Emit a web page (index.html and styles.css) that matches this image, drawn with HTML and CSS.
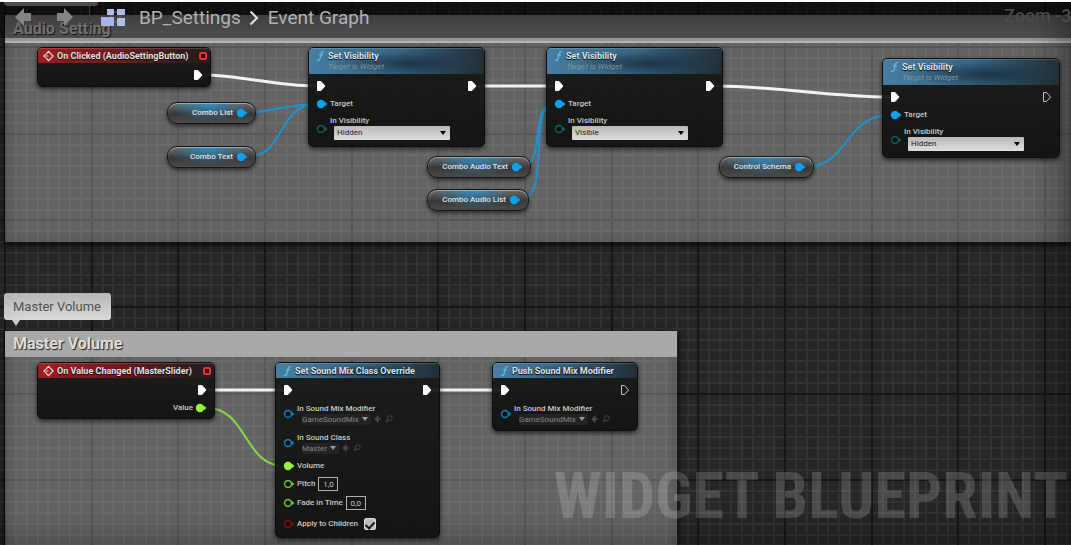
FILE: index.html
```html
<!DOCTYPE html>
<html lang="en">
<head>
<meta charset="utf-8">
<title>BP_Settings - Event Graph</title>
<link rel="stylesheet" href="styles.css">
</head>
<body>
<svg class="defs" aria-hidden="true">
  <defs>
    <symbol id="exec" viewBox="0 0 10 12"><path d="M1.5 1.5H5L9 6L5 10.500H1.500Z" fill="#fff" stroke="#fff" stroke-linejoin="round"/></symbol>
    <symbol id="exec-open" viewBox="0 0 10 12"><path d="M1.500 1.500H4.500L8.500 6L4.500 10.500H1.500Z" fill="none" stroke="#c4c4c4" stroke-linejoin="round"/></symbol>
    <symbol id="pin" viewBox="0 0 12 10"><circle cx="5" cy="5" r="4.200" fill="currentColor"/><path d="M9 2.800L11.500 5L9 7.200Z" fill="currentColor"/></symbol>
    <symbol id="pin-open" viewBox="0 0 12 10"><circle cx="5" cy="5" r="3.400" fill="#080c0c" stroke="currentColor" stroke-width="1.600"/><path d="M9 2.800L11.500 5L9 7.200Z" fill="currentColor"/></symbol>
    <symbol id="func" viewBox="0 0 10 12"><path d="M9 1.600C7.500.600 6.300 1.200 5.900 3L4.500 9C4.100 10.800 2.600 11.500 1 10.500M3.300 4.800H7.800" fill="none" stroke="#63b5e8" stroke-width="1.500"/></symbol>
    <symbol id="event" viewBox="0 0 12 12"><path d="M4 4V3L6 1L11 6L6 11L4 9V8M3 4L1 6L3 8M3 6H6" fill="none" stroke="#e6dcdc" stroke-width="1.300"/></symbol>
    <symbol id="use-asset" viewBox="0 0 10 10"><path d="M9 5H3M5 1.500L1.500 5L5 8.500Z" fill="#484a48" stroke="#484a48" stroke-width="1.600"/></symbol>
    <symbol id="find" viewBox="0 0 10 10"><circle cx="6" cy="4" r="3" fill="none" stroke="#484a48" stroke-width="1.200"/><path d="M4 6L1 9" stroke="#484a48" stroke-width="1.500"/></symbol>
  </defs>
</svg>
<main class="graph">
  <svg class="grid" aria-hidden="true">
    <defs>
      <pattern id="cells" x="4" y="44" width="260" height="260" patternUnits="userSpaceOnUse">
        <rect width="260" height="260" fill="#262626"/>
        <path stroke="#323232" stroke-width="2" d="M12 0V260M23 0V260M34 0V260M44 0V260M55 0V260M66 0V260M77 0V260M99 0V260M109 0V260M120 0V260M131 0V260M142 0V260M153 0V260M164 0V260M185 0V260M196 0V260M207 0V260M218 0V260M229 0V260M239 0V260M250 0V260M0 12H260M0 23H260M0 34H260M0 44H260M0 55H260M0 66H260M0 77H260M0 99H260M0 109H260M0 120H260M0 131H260M0 142H260M0 153H260M0 164H260M0 185H260M0 196H260M0 207H260M0 218H260M0 229H260M0 239H260M0 250H260"/>
        <path stroke="#161616" stroke-width="2" d="M1 0V260M88 0V260M174 0V260M0 1H260M0 88H260M0 174H260"/>
      </pattern>
    </defs>
    <rect width="100%" height="100%" fill="url(#cells)"/>
  </svg>

  <section class="comment audio"><h2>Audio Setting</h2></section>
  <section class="comment master"><h2>Master Volume</h2></section>
  <div class="bubble">Master Volume</div>
  <div class="watermark">WIDGET BLUEPRINT</div>
  <div class="vignette"></div>

  <svg class="wires" aria-hidden="true">
    <g stroke="#f2f2f2" stroke-width="3">
      <path d="M203 75C240 75 275 86 316 86"/>
      <path d="M478 86H554"/>
      <path d="M715 86C775 86 830 97 890 97"/>
      <path d="M207 390H284M432 390H501"/>
    </g>
    <g stroke="#1f93cf" stroke-width="2">
      <path d="M246 113C270 112 292 104 317 104"/>
      <path d="M246 157C286 157 277 104 317 104"/>
      <path d="M521 167C547 167 528 104 554 104"/>
      <path d="M519 200C553 200 526 104 554 104"/>
      <path d="M804 167C850 167 844 115 890 115"/>
    </g>
    <path d="M207 408C247 408 244 466 284 466" stroke="#86d944" stroke-width="2"/>
  </svg>

  <article class="node on-clicked">
    <header class="event"><svg class="i12"><use href="#event"/></svg><h3>On Clicked (AudioSettingButton)</h3><i class="delegate"></i></header>
    <div class="body"><div class="row flow end"><svg class="exec"><use href="#exec"/></svg></div></div>
  </article>

  <article class="node vis-1">
    <header class="tall"><svg class="fn"><use href="#func"/></svg><div><h3>Set Visibility</h3><p>Target is Widget</p></div></header>
    <div class="body">
      <div class="row flow"><svg class="exec"><use href="#exec"/></svg><svg class="exec"><use href="#exec"/></svg></div>
      <div class="row blue"><svg class="pin"><use href="#pin"/></svg><span>Target</span></div>
      <div class="row field teal"><svg class="pin"><use href="#pin-open"/></svg><div class="stack"><label for="v1">In Visibility</label><select id="v1"><option>Hidden</option><option>Visible</option></select></div></div>
    </div>
  </article>

  <article class="node vis-2">
    <header class="tall"><svg class="fn"><use href="#func"/></svg><div><h3>Set Visibility</h3><p>Target is Widget</p></div></header>
    <div class="body">
      <div class="row flow"><svg class="exec"><use href="#exec"/></svg><svg class="exec"><use href="#exec"/></svg></div>
      <div class="row blue"><svg class="pin"><use href="#pin"/></svg><span>Target</span></div>
      <div class="row field teal"><svg class="pin"><use href="#pin-open"/></svg><div class="stack"><label for="v2">In Visibility</label><select id="v2"><option>Visible</option><option>Hidden</option></select></div></div>
    </div>
  </article>

  <article class="node vis-3">
    <header class="tall"><svg class="fn"><use href="#func"/></svg><div><h3>Set Visibility</h3><p>Target is Widget</p></div></header>
    <div class="body">
      <div class="row flow"><svg class="exec"><use href="#exec"/></svg><svg class="exec"><use href="#exec-open"/></svg></div>
      <div class="row blue"><svg class="pin"><use href="#pin"/></svg><span>Target</span></div>
      <div class="row field teal"><svg class="pin"><use href="#pin-open"/></svg><div class="stack"><label for="v3">In Visibility</label><select id="v3"><option>Hidden</option><option>Visible</option></select></div></div>
    </div>
  </article>

  <div class="pill combo-list"><span>Combo List</span><svg class="pin blue"><use href="#pin"/></svg></div>
  <div class="pill combo-text"><span>Combo Text</span><svg class="pin blue"><use href="#pin"/></svg></div>
  <div class="pill audio-text"><span>Combo Audio Text</span><svg class="pin blue"><use href="#pin"/></svg></div>
  <div class="pill audio-list"><span>Combo Audio List</span><svg class="pin blue"><use href="#pin"/></svg></div>
  <div class="pill schema"><span>Control Schema</span><svg class="pin blue"><use href="#pin"/></svg></div>

  <article class="node on-value">
    <header class="event"><svg class="i12"><use href="#event"/></svg><h3>On Value Changed (MasterSlider)</h3><i class="delegate"></i></header>
    <div class="body">
      <div class="row flow end"><svg class="exec"><use href="#exec"/></svg></div>
      <div class="row end green"><span>Value</span><svg class="pin"><use href="#pin"/></svg></div>
    </div>
  </article>

  <article class="node override">
    <header><svg class="fn"><use href="#func"/></svg><h3>Set Sound Mix Class Override</h3></header>
    <div class="body">
      <div class="row flow"><svg class="exec"><use href="#exec"/></svg><svg class="exec"><use href="#exec"/></svg></div>
      <div class="row asset deep"><svg class="pin"><use href="#pin-open"/></svg><div class="stack"><span>In Sound Mix Modifier</span><div class="picker"><button class="pick">GameSoundMix <i class="caret"></i></button><button class="tool" aria-label="Use selected"><svg><use href="#use-asset"/></svg></button><button class="tool" aria-label="Browse"><svg><use href="#find"/></svg></button></div></div></div>
      <div class="row asset deep"><svg class="pin"><use href="#pin-open"/></svg><div class="stack"><span>In Sound Class</span><div class="picker"><button class="pick">Master <i class="caret"></i></button><button class="tool" aria-label="Use selected"><svg><use href="#use-asset"/></svg></button><button class="tool" aria-label="Browse"><svg><use href="#find"/></svg></button></div></div></div>
      <div class="row green"><svg class="pin"><use href="#pin"/></svg><span>Volume</span></div>
      <div class="row lime"><svg class="pin"><use href="#pin-open"/></svg><label for="pitch">Pitch</label><input class="num" id="pitch" value="1,0"></div>
      <div class="row lime"><svg class="pin"><use href="#pin-open"/></svg><label for="fade">Fade in Time</label><input class="num" id="fade" value="0,0"></div>
      <div class="row last red"><svg class="pin"><use href="#pin-open"/></svg><label for="kids">Apply to Children</label><input class="tick" type="checkbox" id="kids" checked></div>
    </div>
  </article>

  <article class="node push">
    <header><svg class="fn"><use href="#func"/></svg><h3>Push Sound Mix Modifier</h3></header>
    <div class="body">
      <div class="row flow"><svg class="exec"><use href="#exec"/></svg><svg class="exec"><use href="#exec-open"/></svg></div>
      <div class="row asset deep"><svg class="pin"><use href="#pin-open"/></svg><div class="stack"><span>In Sound Mix Modifier</span><div class="picker"><button class="pick">GameSoundMix <i class="caret"></i></button><button class="tool" aria-label="Use selected"><svg><use href="#use-asset"/></svg></button><button class="tool" aria-label="Browse"><svg><use href="#find"/></svg></button></div></div></div>
    </div>
  </article>

  <nav class="bar">
    <div class="tab"></div>
    <div class="history">
      <button aria-label="Back"><svg viewBox="0 0 18 20"><path d="M1 10L10 1V6H17V14H10V19Z"/></svg></button>
      <button aria-label="Forward"><svg viewBox="0 0 18 20"><path d="M17 10L8 1V6H1V14H8V19Z"/></svg></button>
    </div>
    <svg class="logo" viewBox="0 0 26 19" aria-hidden="true"><path d="M12 4H18M10 14H18M11 7V10M20 7V11" stroke="#6d7390" stroke-width="1"/><path d="M7 1H14V7H7ZM17 1H25V7H17ZM17 10H25V18H17Z" fill="#b3bce4"/><path d="M1 9H14V18H1Z" fill="#a9b3e6"/></svg>
    <a href="#">BP_Settings</a>
    <svg class="sep" viewBox="0 0 10 16" aria-hidden="true"><path d="M1.500 1.500L8 8L1.500 14.500" fill="none" stroke="#e4e4e4" stroke-width="2"/></svg>
    <span class="here">Event Graph</span>
    <span class="zoom">Zoom -3</span>
  </nav>
</main>
</body>
</html>
```
FILE: styles.css
```css
* { box-sizing: border-box; }
body { margin: 0; font-family: Roboto, "Liberation Sans", sans-serif; background: #262626; }
h2, h3, p { margin: 0; }
button, input, select { font: inherit; margin: 0; padding: 0; border: 0; background: none; color: inherit; }
.defs { position: absolute; width: 0; height: 0; }
svg { display: block; flex: none; }

.graph { position: relative; min-height: 100vh; overflow: hidden; border-top: 2px solid #fff; }
.grid, .wires, .vignette { position: absolute; top: -2px; left: 0; width: 100%; height: calc(100% + 2px); }
.grid { top: 0; }
.grid, .wires { pointer-events: none; }
.wires { fill: none; }
.vignette { pointer-events: none; box-shadow: inset -16px -8px 40px -8px rgba(0, 0, 0, .4); }

/* comment boxes */
.comment { position: absolute; background: rgba(225, 225, 225, .33); box-shadow: 0 2px 6px 1px rgba(0, 0, 0, .8), inset 0 0 14px rgba(0, 0, 0, .2); }
.comment h2 { padding: 0 8px; font-size: 16px; line-height: 26px; color: #ddd; text-shadow: 1px 1px 1px #222; background: #a9a9a9; }
.audio { left: 5px; right: 0; top: 13px; height: 227px; }
.audio h2 { padding-top: 2px; line-height: 24px; color: #e2e2e2; background: #969696; border-bottom: 2px solid #b4b4b4; }
.master { left: 5px; top: 329px; width: 672px; bottom: -20px; }
.bubble { position: absolute; left: 4px; top: 291px; padding: 0 10px 0 9px; font-size: 13px; line-height: 27px; color: #505050; border-radius: 3px; background: linear-gradient(#b5b5b5, #dadada); }
.bubble::after { content: ""; position: absolute; left: 8px; top: 100%; border: 4px solid transparent; border-top: 6px solid #ccc; border-bottom: 0; }
.watermark { position: absolute; right: 3px; bottom: 10px; font-family: "Roboto Condensed", "Liberation Sans Narrow", Roboto, sans-serif; font-size: 64px; line-height: 76px; font-weight: 700; color: rgba(255, 255, 255, .17); white-space: nowrap; }

/* nodes */
.node { position: absolute; border-radius: 5px; color: #c8c8c8; font-size: 8px; line-height: 10px; white-space: nowrap; background: linear-gradient(rgba(22, 24, 22, .93), rgba(16, 18, 16, .96)); border: 1px solid #0c0e0e; box-shadow: 0 2px 5px rgba(0, 0, 0, .65); }
.node header { display: flex; align-items: center; gap: 3px; height: 15px; padding: 0 8px 0 7px; border-radius: 4px 4px 0 0; background: radial-gradient(ellipse at 60% 60%, #1c3547 0, transparent 55%), linear-gradient(100deg, #477ea2 0, #356582 50%, #222c33 100%); box-shadow: inset 0 1px rgba(255, 255, 255, .16); }
.node header.event { padding: 0 3px 0 5px; background: linear-gradient(100deg, #a01c20 0, #701a1c 45%, #2a1c1c 90%); }
.node header.tall { height: 26px; align-items: flex-start; padding-top: 2px; }
.node h3 { font-size: 9px; line-height: 12px; font-weight: 700; color: #dfe3e6; text-shadow: 0 1px 1px #000; }
.node p { font-size: 8px; line-height: 10px; font-style: italic; color: #81939b; }
.i12 { width: 11px; height: 12px; }
.fn { width: 9px; height: 12px; }
.delegate { width: 8px; height: 8px; margin-left: auto; border: 2px solid #f03030; border-radius: 2px; background: #200; }
.body { display: flex; flex-direction: column; gap: 5px; padding: 0 7px 6px; }
.row { display: flex; align-items: center; gap: 2px; min-height: 12px; }
.flow { justify-content: space-between; height: 24px; margin-bottom: -5px; }
.end { justify-content: flex-end; }
.exec { width: 10px; height: 12px; }
.pin { width: 12px; height: 10px; }
.row > span, .row > label, .stack > span, .stack > label { color: #c8c8c8; font-weight: 500; }
.stack { display: flex; flex-direction: column; }
.field { align-items: flex-end; height: 25px; }
.field .pin { margin-bottom: 6px; }
.stack select { appearance: none; width: 116px; height: 14px; margin-left: 4px; padding: 0 3px; font-size: 8px; line-height: 14px; color: #1c1c1c; background: linear-gradient(#b9b9b9, #dedede); border-radius: 1px; }
.field .stack { position: relative; }
.field .stack::after { content: ""; position: absolute; right: 4px; bottom: 5px; border: 3px solid transparent; border-top: 4px solid #000; border-bottom: 0; pointer-events: none; }
.asset { height: 24px; }
.picker { display: flex; align-items: center; gap: 3px; padding-left: 5px; }
.pick { display: flex; align-items: center; gap: 3px; padding-right: 3px; font-size: 8px; line-height: 11px; color: #858585; background: #222422; border-radius: 2px; }
.caret { border: 3px solid transparent; border-top: 4px solid #999; border-bottom: 0; }
.tool svg { width: 8px; height: 8px; }
.num { width: 20px; height: 14px; border: 1px solid #b0b0b0; font-size: 8px; line-height: 12px; text-align: center; color: #c8c8c8; margin-left: 1px; }
.tick { appearance: none; display: grid; place-items: center; width: 12px; height: 12px; margin-left: 4px; border-radius: 2px; background: #bdbdbd; border: 1px solid #ddd; }
.tick:checked::after { content: ""; width: 4px; height: 7px; border: solid #161616; border-width: 0 2px 2px 0; transform: rotate(42deg); }
.last { height: 18px; }
.blue { color: #0ba0f0; }
.teal { color: #0d5f5c; }
.deep { color: #1279b0; }
.green { color: #96f63c; }
.lime { color: #72b62c; }
.red { color: #7a1010; }

.on-clicked { left: 37px; top: 45px; width: 174px; }
.vis-1 { left: 308px; top: 45px; width: 177px; }
.vis-2 { left: 546px; top: 45px; width: 177px; }
.vis-3 { left: 882px; top: 56px; width: 178px; }
.on-value { left: 37px; top: 360px; width: 178px; }
.override { left: 275px; top: 360px; width: 165px; }
.push { left: 492px; top: 360px; width: 146px; }
.on-clicked .body, .on-value .body, .push .body, .override .body { padding-bottom: 4px; }

/* variable getters */
.pill { position: absolute; display: flex; align-items: center; justify-content: flex-end; gap: 3px; height: 22px; padding-right: 7px; border-radius: 10px; font-size: 8px; line-height: 10px; font-weight: 500; color: #e0e0e0; white-space: nowrap; border: 1px solid #151515; background: radial-gradient(ellipse 38px 16px at 46% 10%, rgba(40, 140, 195, .85), transparent), linear-gradient(#6a6a6a, #383838 55%, #4c4c4c); box-shadow: inset 0 1px 1px rgba(255, 255, 255, .45), 0 2px 4px rgba(0, 0, 0, .6); }
.combo-list { left: 167px; top: 100px; width: 89px; }
.combo-text { left: 167px; top: 144px; width: 89px; }
.audio-text { left: 427px; top: 154px; width: 104px; }
.audio-list { left: 427px; top: 187px; width: 102px; }
.schema { left: 719px; top: 154px; width: 95px; }

/* title bar */
.bar { position: relative; display: flex; align-items: center; height: 36px; padding-bottom: 5px; background: linear-gradient(rgba(0, 0, 0, .62), rgba(0, 0, 0, .48)); font-size: 19px; line-height: 24px; color: #b2b2b2; white-space: nowrap; overflow: hidden; }
.bar a { color: inherit; text-decoration: none; margin: 0 8px 0 13px; }
.tab { position: absolute; left: 4px; top: -4px; width: 94px; height: 8px; border-radius: 4px; background: #4d4d4d; }
.history { display: flex; align-items: flex-start; gap: 24px; width: 90px; height: 31px; padding: 5px 0 0 14px; border-right: 1px solid #3c3c3c; }
.history svg { width: 18px; height: 20px; fill: #858585; }
.logo { width: 26px; height: 19px; margin-left: 10px; }
.sep { width: 10px; height: 16px; margin-right: 9px; }
.zoom { position: absolute; left: calc(100% - 67px); top: 2px; font-size: 18px; font-weight: 500; color: #4a4a4a; }
```
